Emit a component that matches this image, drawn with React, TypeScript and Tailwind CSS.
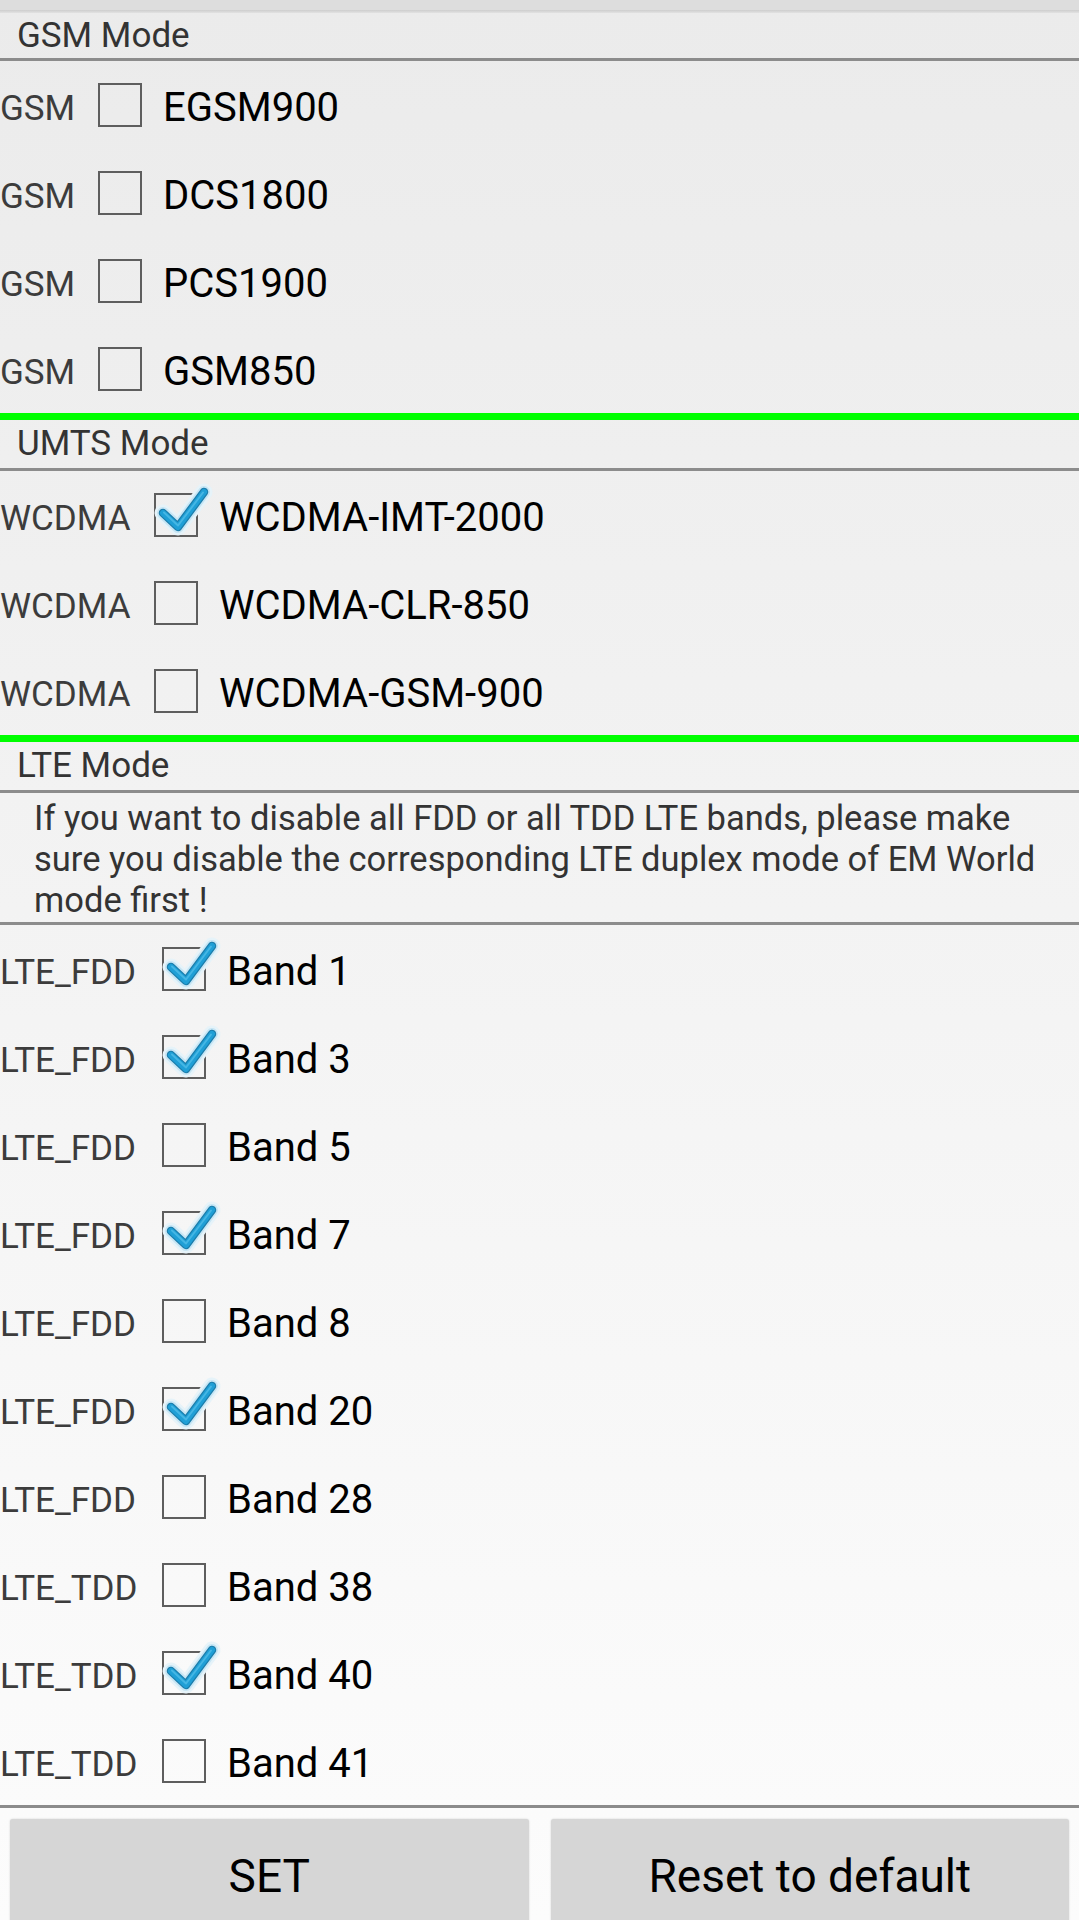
import React from "react";

type Band = { mode: string; name: string; checked: boolean };

const gsmBands: Band[] = [
  { mode: "GSM", name: "EGSM900", checked: false },
  { mode: "GSM", name: "DCS1800", checked: false },
  { mode: "GSM", name: "PCS1900", checked: false },
  { mode: "GSM", name: "GSM850", checked: false },
];

const umtsBands: Band[] = [
  { mode: "WCDMA", name: "WCDMA-IMT-2000", checked: true },
  { mode: "WCDMA", name: "WCDMA-CLR-850", checked: false },
  { mode: "WCDMA", name: "WCDMA-GSM-900", checked: false },
];

const lteBands: Band[] = [
  { mode: "LTE_FDD", name: "Band 1", checked: true },
  { mode: "LTE_FDD", name: "Band 3", checked: true },
  { mode: "LTE_FDD", name: "Band 5", checked: false },
  { mode: "LTE_FDD", name: "Band 7", checked: true },
  { mode: "LTE_FDD", name: "Band 8", checked: false },
  { mode: "LTE_FDD", name: "Band 20", checked: true },
  { mode: "LTE_FDD", name: "Band 28", checked: false },
  { mode: "LTE_TDD", name: "Band 38", checked: false },
  { mode: "LTE_TDD", name: "Band 40", checked: true },
  { mode: "LTE_TDD", name: "Band 41", checked: false },
];

const CHECK = "9,20 24,34 50,-1";

function CheckBox({ checked }: { checked: boolean }) {
  return (
    <div className="relative w-[44px] h-[44px] shrink-0 border-2 border-[#5e5e5e]">
      {checked && (
        <svg
          className="absolute -left-[2px] -top-[2px] overflow-visible"
          width="44"
          height="44"
          viewBox="0 0 44 44"
        >
          {/* glow */}
          <polyline points={CHECK} fill="none" stroke="#e6f3f9" strokeWidth="17" strokeLinecap="round" strokeLinejoin="round" />
          <polyline points={CHECK} fill="none" stroke="#c6e5f4" strokeWidth="12" strokeLinecap="round" strokeLinejoin="round" />
          <polyline points={CHECK} fill="none" stroke="#1b7dab" strokeWidth="8.5" strokeLinecap="round" strokeLinejoin="round" />
          <polyline points={CHECK} fill="none" stroke="#1f9fd6" strokeWidth="6" strokeLinecap="round" strokeLinejoin="round" />
          <polyline
            points="10,19.5 24,32.5 49,-0.5"
            fill="none"
            stroke="#45b6e4"
            strokeWidth="2"
            strokeLinecap="round"
            strokeLinejoin="round"
          />
        </svg>
      )}
    </div>
  );
}

function BandRow({ band, labelWidth }: { band: Band; labelWidth: string }) {
  return (
    <div className="h-[88px] flex items-center">
      <span className={`${labelWidth} shrink-0 pt-[6px] text-[35px] text-[#3c3c3c] leading-none`}>
        {band.mode}
      </span>
      <div className="ml-[23px]">
        <CheckBox checked={band.checked} />
      </div>
      <span className="ml-[21px] pt-[6px] text-[40px] text-black leading-none">{band.name}</span>
    </div>
  );
}

function SectionHeader({ title, tall = true }: { title: string; tall?: boolean }) {
  return (
    <>
      <div className={`${tall ? "h-[48px] leading-[48px]" : "h-[45px] leading-[45px]"} pl-[17px] text-[35px] text-[#333]`}>
        {title}
      </div>
      <div className="h-[3px] bg-[#8c8c8c]" />
    </>
  );
}

export default function App() {
  return (
    <div
      className="w-[1079px] h-[1920px] overflow-hidden bg-linear-to-b from-[#ebebeb] to-[#fcfcfc]"
      style={{ fontFamily: "Roboto, 'Noto Sans', sans-serif" }}
    >
      {/* status shadow */}
      <div className="h-[10px] bg-[#dddddd]" />
      <div className="h-[3px] bg-linear-to-b from-[#cdcdcd] to-[#e2e2e2]" />

      <SectionHeader title="GSM Mode" tall={false} />
      {gsmBands.map((b) => (
        <BandRow key={b.name} band={b} labelWidth="w-[75px]" />
      ))}
      <div className="h-[7px] bg-[#00ff00]" />

      <SectionHeader title="UMTS Mode" />
      {umtsBands.map((b) => (
        <BandRow key={b.name} band={b} labelWidth="w-[131px]" />
      ))}
      <div className="h-[7px] bg-[#00ff00]" />

      <SectionHeader title="LTE Mode" />
      <div className="pt-[5px] pb-[1px] pl-[34px] pr-[14px] text-[34.5px] leading-[41px] text-[#333]">
        If you want to disable all FDD or all TDD LTE bands, please make sure you disable the
        corresponding LTE duplex mode of EM World mode first !
      </div>
      <div className="h-[3px] bg-[#8c8c8c]" />
      {lteBands.map((b) => (
        <BandRow key={b.name} band={b} labelWidth="w-[139px]" />
      ))}
      <div className="h-[3px] bg-[#8c8c8c]" />

      <div className="mt-[11px] px-[10px] flex gap-[22px]">
        <button className="flex-1 h-[114px] rounded-[3px] bg-[#d6d6d6] shadow-[0_0_2px_rgba(0,0,0,0.18)] text-[46px] text-black">
          SET
        </button>
        <button className="flex-1 h-[114px] rounded-[3px] bg-[#d6d6d6] shadow-[0_0_2px_rgba(0,0,0,0.18)] text-[46px] text-black">
          Reset to default
        </button>
      </div>
    </div>
  );
}
